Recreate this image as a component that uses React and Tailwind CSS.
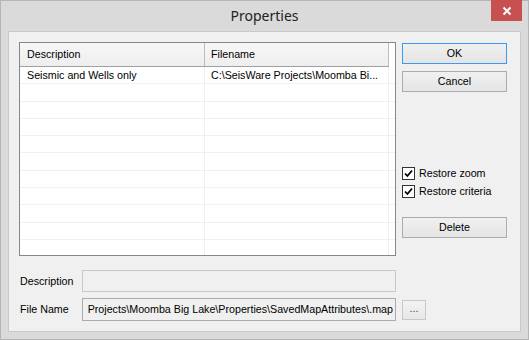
import React from 'react'

const font = { fontFamily: '"Liberation Sans", Arial, sans-serif' }

function Check({ label }) {
  return (
    <label className="flex items-center h-[12px] gap-[4px] text-[10.7px] text-black">
      <span className="w-[13px] h-[13px] border border-[#333] bg-white flex items-center justify-center">
        <svg width="9" height="9" viewBox="0 0 9 9">
          <path d="M1 4.5 L3.4 7 L8 1.5" fill="none" stroke="#000" strokeWidth="1.8" />
        </svg>
      </span>
      {label}
    </label>
  )
}

function Btn({ children, primary, className = '' }) {
  return (
    <button
      className={`h-[21px] w-[105px] text-[10.7px] text-black border bg-gradient-to-b from-[#f0f0f0] to-[#e5e5e5] ${primary ? 'border-[#3c9bf0]' : 'border-[#acacac]'} ${className}`}
    >
      {children}
    </button>
  )
}

export default function App() {
  const rows = Array.from({ length: 11 })
  return (
    <div className="w-[529px] h-[340px] bg-[#dadada] border border-[#b5b5b5] flex flex-col" style={font}>
      {/* title bar */}
      <div className="h-[30px] relative flex items-center justify-center">
        <span className="text-[14px] text-[#222] -mt-[1px]" style={{ fontFamily: '"Noto Sans", "Open Sans", sans-serif' }}>Properties</span>
        <div className="absolute right-[6px] top-[-1px] w-[31px] h-[21px] bg-[#c75050] flex items-center justify-center">
          <svg width="10" height="10" viewBox="0 0 10 10">
            <path d="M1.5 1.5 L8.5 8.5 M8.5 1.5 L1.5 8.5" stroke="#fff" strokeWidth="2" />
          </svg>
        </div>
      </div>

      {/* client area */}
      <div className="mx-[7px] mb-[7px] flex-1 bg-[#f0f0f0] border border-[#c9c9c9] pl-[10px] pr-[13px] pt-[10px] flex flex-col">
        <div className="flex gap-[6px]">
          {/* list view */}
          <div className="w-[377px] h-[214px] bg-white border border-[#828790] overflow-hidden">
            <div className="flex h-[24px] w-[369px] border-b border-[#a0a0a0] bg-gradient-to-b from-[#f7f7f7] to-[#eeeeee] text-[10.7px] text-black">
              <div className="w-[185px] border-r border-[#bdbdbd] flex items-center pl-[7px]">Description</div>
              <div className="flex-1 border-r border-[#bdbdbd] flex items-center pl-[6px]">Filename</div>
            </div>
            {rows.map((_, i) => (
              <div key={i} className="flex h-[17.3px] text-[10.7px] text-black border-b border-[#f0f0f0]">
                <div className="w-[185px] border-r border-[#f0f0f0] pl-[7px] flex items-center whitespace-nowrap">
                  {i === 0 ? 'Seismic and Wells only' : ''}
                </div>
                <div className="w-[184px] border-r border-[#f0f0f0] pl-[6px] flex items-center whitespace-nowrap overflow-hidden">
                  {i === 0 ? 'C:\\SeisWare Projects\\Moomba Bi...' : ''}
                </div>
              </div>
            ))}
          </div>

          {/* buttons */}
          <div className="flex flex-col pt-[1px]">
            <Btn primary>OK</Btn>
            <Btn className="mt-[7px]">Cancel</Btn>
            <div className="mt-[75px] flex flex-col gap-[6px]">
              <Check label="Restore zoom" />
              <Check label="Restore criteria" />
            </div>
            <Btn className="mt-[20px]">Delete</Btn>
          </div>
        </div>

        {/* fields */}
        <div className="mt-[14px] flex items-center text-[10.7px] text-black">
          <div className="w-[63px] pl-[1px]">Description</div>
          <div className="w-[314px] h-[22px] border border-[#c8c8c8] bg-[#f0f0f0]" />
        </div>
        <div className="mt-[6px] flex items-center text-[10.7px] text-black">
          <div className="w-[63px] pl-[1px]">File Name</div>
          <div className="w-[314px] h-[23px] border border-[#ababab] bg-[#f0f0f0] flex items-center justify-end overflow-hidden pr-[2px] whitespace-nowrap">
            Projects\Moomba Big Lake\Properties\SavedMapAttributes\.map
          </div>
          <button className="ml-[6px] w-[24px] h-[20px] border border-[#c8c8c8] bg-gradient-to-b from-[#f2f2f2] to-[#e8e8e8] text-[11px] leading-none text-[#444] flex items-end justify-center pb-[5px]">...</button>
        </div>
      </div>
    </div>
  )
}
